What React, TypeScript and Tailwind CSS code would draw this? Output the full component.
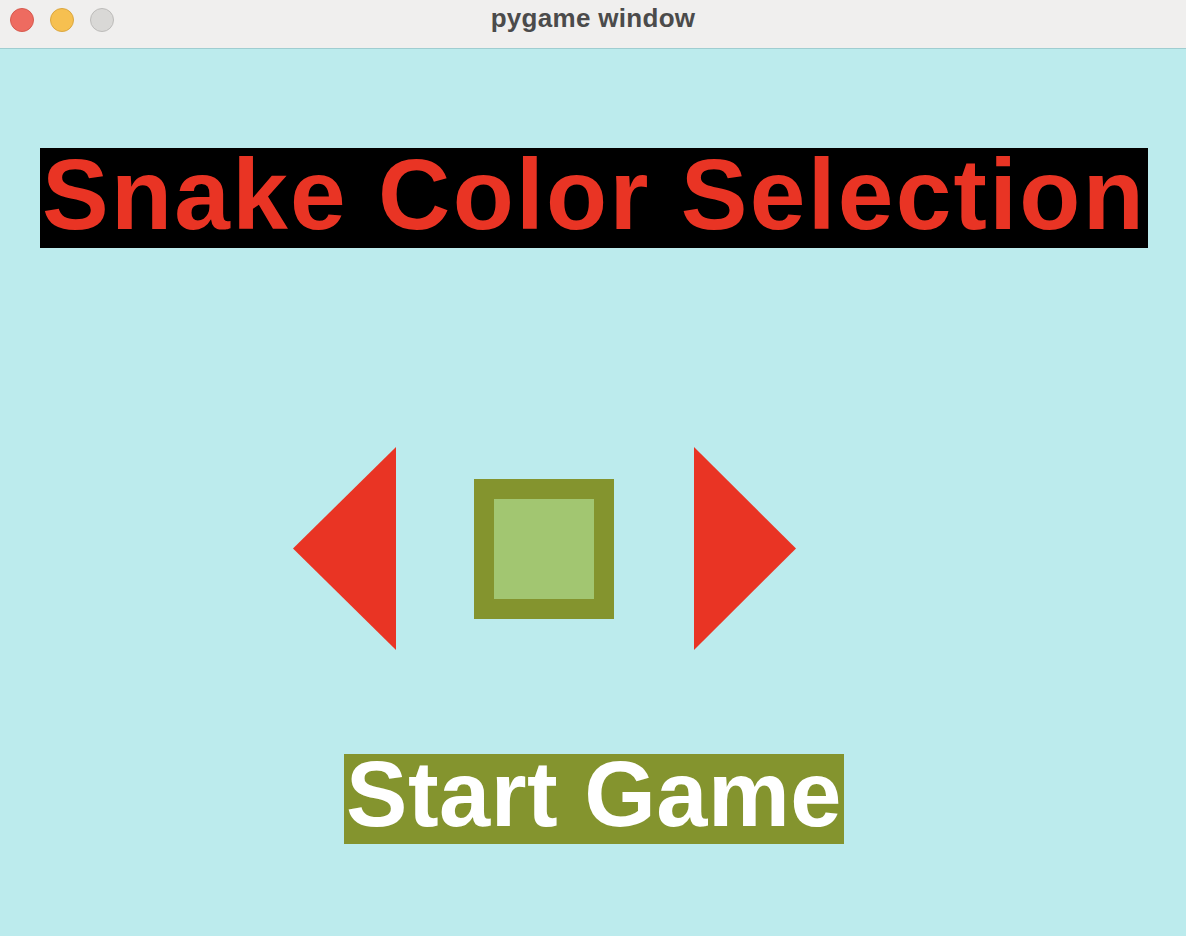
const Dot = ({ className }: { className: string }) => (
  <span className={`block w-6 h-6 rounded-full border ${className}`}></span>
)

const Arrow = ({ dir }: { dir: "left" | "right" }) => (
  <svg width="103" height="203" viewBox="0 0 103 203" className="block">
    {dir === "left" ? (
      <polygon points="0,101.5 103,0 103,203" fill="#e93424" />
    ) : (
      <polygon points="0,0 0,203 102,101.5" fill="#e93424" />
    )}
  </svg>
)

const App = () => {
  return (
    <div className="w-[1186px] h-[936px] flex flex-col bg-[#bcebed] overflow-hidden" style={{ fontFamily: '"Liberation Sans", Arial, sans-serif' }}>
      {/* window chrome */}
      <div className="relative h-[49px] bg-[#f0efee] border-b border-[#9fcdd0] flex items-center shrink-0">
        <div className="flex items-center gap-4 pl-[10px] -mt-2">
          <Dot className="bg-[#ee6b60] border-[#d65a4e]" />
          <Dot className="bg-[#f6c050] border-[#dba73f]" />
          <Dot className="bg-[#d9d8d6] border-[#bdbcba]" />
        </div>
        <div className="absolute inset-0 flex justify-center items-start pt-[3px] pointer-events-none">
          <span className="text-[26px] leading-[30px] font-bold text-[#4b4b4b] tracking-[0.3px]">pygame window</span>
        </div>
      </div>

      {/* title */}
      <div className="mt-[99px] ml-[40px] w-[1108px] h-[100px] bg-black flex items-start justify-center">
        <span className="text-[100px] leading-[92px] font-bold text-[#e93424] tracking-[2.3px] whitespace-nowrap">
          Snake Color Selection
        </span>
      </div>

      {/* color picker */}
      <div className="mt-[199px] ml-[293px] flex items-center">
        <Arrow dir="left" />
        <div className="ml-[78px] w-[140px] h-[140px] bg-[#84942e] p-[20px]">
          <div className="w-full h-full bg-[#a2c671]"></div>
        </div>
        <div className="ml-[80px]">
          <Arrow dir="right" />
        </div>
      </div>

      {/* start */}
      <div className="mt-[104px] ml-[344px] w-[500px] h-[90px] bg-[#84942e] flex items-start justify-center">
        <span className="text-[92px] leading-[81px] font-bold text-white whitespace-nowrap tracking-[0.5px]">Start Game</span>
      </div>
    </div>
  )
}

export default App
